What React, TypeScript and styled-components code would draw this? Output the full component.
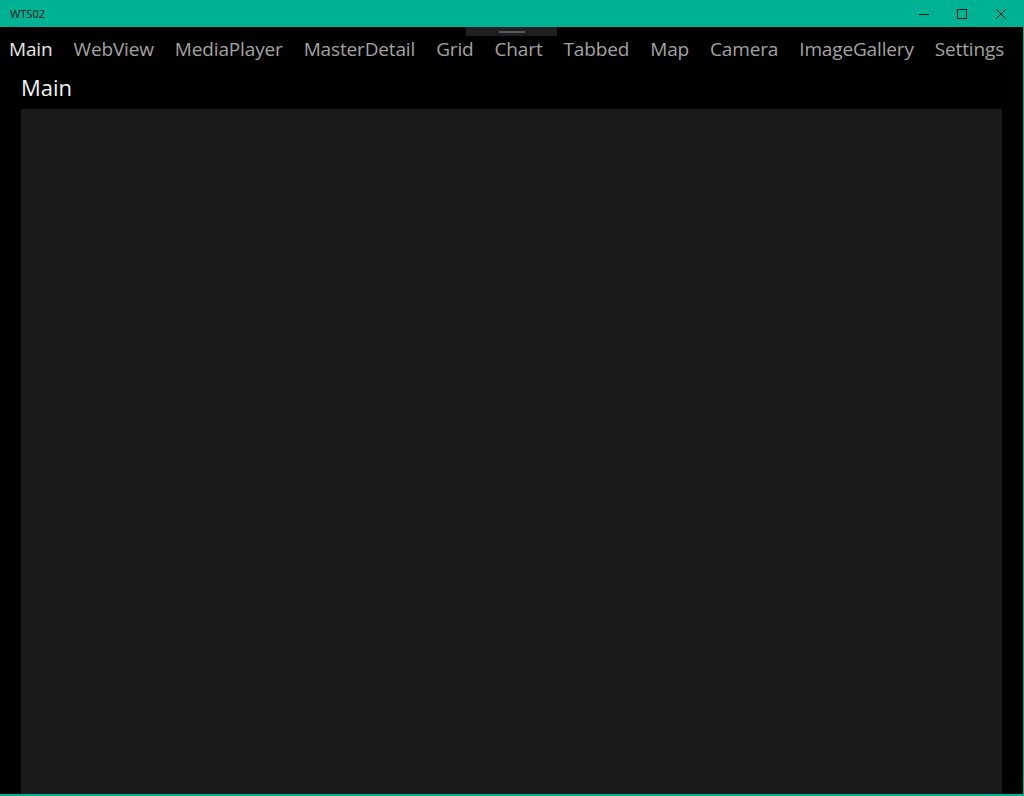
import styled, { createGlobalStyle } from "styled-components";

const GlobalStyle = createGlobalStyle`
  html, body {
    margin: 0;
    padding: 0;
    background: #000000;
    font-family: "Open Sans", "Noto Sans", sans-serif;
  }
`;

const navItems = [
  "Main",
  "WebView",
  "MediaPlayer",
  "MasterDetail",
  "Grid",
  "Chart",
  "Tabbed",
  "Map",
  "Camera",
  "ImageGallery",
  "Settings",
];

const App = () => {
  return (
    <>
      <GlobalStyle />
      <Window>
        <TitleBar>
          <TitleText>WTS02</TitleText>
          <Controls>
            <ControlButton aria-label="minimize">
              <svg width="10" height="10" viewBox="0 0 10 10">
                <line x1="0" y1="5.5" x2="10" y2="5.5" stroke="#1a1a1a" strokeWidth="1" />
              </svg>
            </ControlButton>
            <ControlButton aria-label="maximize">
              <svg width="10" height="10" viewBox="0 0 10 10">
                <rect x="0.5" y="0.5" width="9" height="9" fill="none" stroke="#1a1a1a" strokeWidth="1" />
              </svg>
            </ControlButton>
            <ControlButton aria-label="close">
              <svg width="10" height="10" viewBox="0 0 10 10">
                <path d="M0 0 L10 10 M10 0 L0 10" stroke="#1a1a1a" strokeWidth="1" />
              </svg>
            </ControlButton>
          </Controls>
        </TitleBar>
        <Body>
          <DragHandle>
            <Grip />
          </DragHandle>
          <Nav>
            {navItems.map((item, i) => (
              <NavItem key={item} $active={i === 0}>
                {item}
              </NavItem>
            ))}
          </Nav>
          <Page>
            <Heading>Main</Heading>
            <Content />
          </Page>
        </Body>
      </Window>
    </>
  );
};

export default App;

const Window = styled.div`
  width: 1024px;
  height: 796px;
  display: flex;
  flex-direction: column;
  box-sizing: border-box;
  border-right: 1px solid #00b294;
  border-bottom: 2px solid #00b294;
  background: #000000;
  overflow: hidden;
`;

const TitleBar = styled.div`
  height: 27px;
  flex-shrink: 0;
  background: #00b294;
  display: flex;
  align-items: center;
  justify-content: space-between;
`;

const TitleText = styled.span`
  padding-left: 10px;
  font-family: "Noto Sans", sans-serif;
  font-size: 11px;
  color: #1a1a1a;
`;

const Controls = styled.div`
  display: flex;
  height: 100%;
`;

const ControlButton = styled.div`
  width: 38px;
  height: 100%;
  display: flex;
  align-items: center;
  justify-content: center;
  &:last-child {
    width: 40px;
    padding-right: 2px;
  }
`;

const Body = styled.div`
  flex: 1;
  display: flex;
  flex-direction: column;
  position: relative;
  min-height: 0;
`;

const DragHandle = styled.div`
  position: absolute;
  top: 0;
  left: 466px;
  width: 91px;
  height: 9px;
  background: #1f1f1f;
  display: flex;
  justify-content: center;
  align-items: center;
`;

const Grip = styled.div`
  width: 26px;
  height: 2px;
  background: #5a5a5a;
`;

const Nav = styled.nav`
  display: flex;
  align-items: center;
  gap: 21px;
  height: 44px;
  padding-left: 9px;
`;

const NavItem = styled.span<{ $active: boolean }>`
  font-size: 19px;
  letter-spacing: -0.15px;
  color: ${(p) => (p.$active ? "#e8e8e8" : "#a3a3a3")};
  white-space: nowrap;
`;

const Page = styled.div`
  flex: 1;
  display: flex;
  flex-direction: column;
  padding: 0 21px 0 21px;
  min-height: 0;
`;

const Heading = styled.h1`
  margin: 0;
  height: 38px;
  font-size: 22px;
  font-weight: 400;
  line-height: 32px;
  color: #f2f2f2;
`;

const Content = styled.div`
  flex: 1;
  background: #1a1a1a;
`;
